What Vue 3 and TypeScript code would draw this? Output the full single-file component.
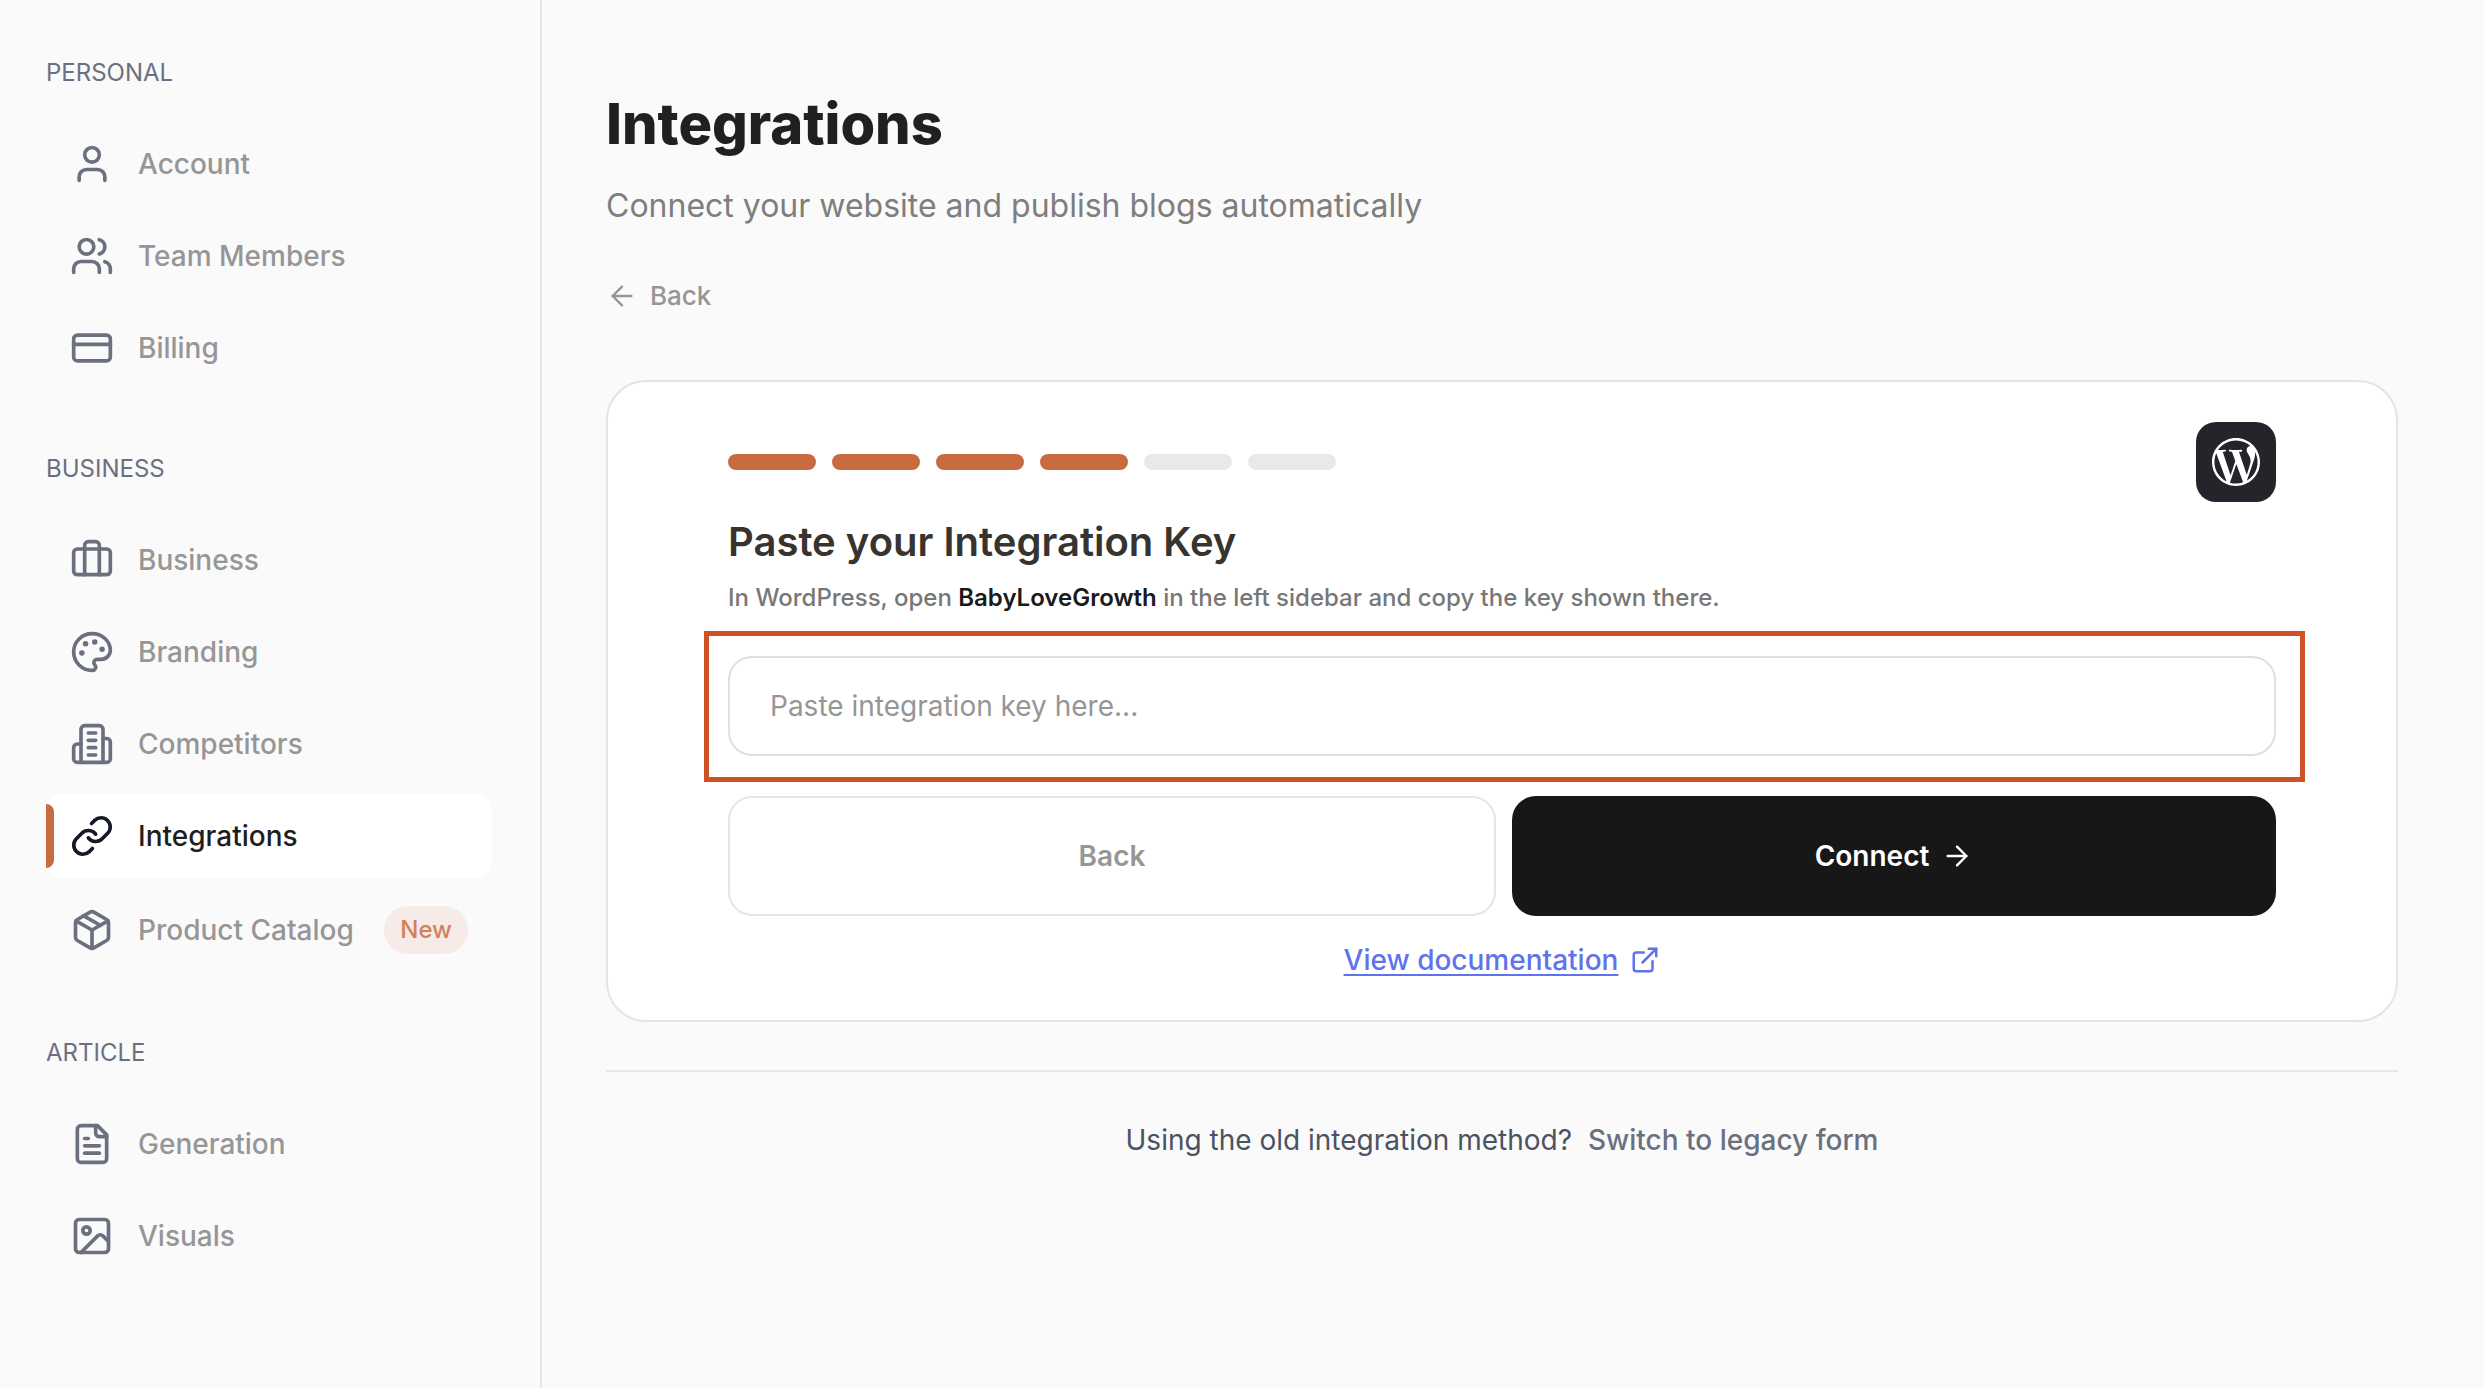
<script setup lang="ts">
import { ref } from 'vue'

interface NavItem {
  label: string
  icon: string[]
  active?: boolean
  badge?: string
}

interface NavSection {
  title: string
  items: NavItem[]
}

// Each icon is a list of stroked paths on a 24 × 24 grid.
const sections: NavSection[] = [
  {
    title: 'PERSONAL',
    items: [
      {
        label: 'Account',
        icon: ['M19 21v-2a4 4 0 0 0-4-4H9a4 4 0 0 0-4 4v2', 'M8 7a4 4 0 1 0 8 0a4 4 0 1 0-8 0'],
      },
      {
        label: 'Team Members',
        icon: [
          'M16 21v-2a4 4 0 0 0-4-4H6a4 4 0 0 0-4 4v2',
          'M5 7a4 4 0 1 0 8 0a4 4 0 1 0-8 0',
          'M22 21v-2a4 4 0 0 0-3-3.87',
          'M16 3.13a4 4 0 0 1 0 7.75',
        ],
      },
      {
        label: 'Billing',
        icon: ['M4 5h16a2 2 0 0 1 2 2v10a2 2 0 0 1-2 2H4a2 2 0 0 1-2-2V7a2 2 0 0 1 2-2z', 'M2 10h20'],
      },
    ],
  },
  {
    title: 'BUSINESS',
    items: [
      {
        label: 'Business',
        icon: [
          'M16 20V4a2 2 0 0 0-2-2h-4a2 2 0 0 0-2 2v16',
          'M4 6h16a2 2 0 0 1 2 2v10a2 2 0 0 1-2 2H4a2 2 0 0 1-2-2V8a2 2 0 0 1 2-2z',
        ],
      },
      {
        label: 'Branding',
        icon: [
          'M12 22a1 1 0 0 1 0-20 10 9 0 0 1 10 9 5 5 0 0 1-5 5h-2.25a1.75 1.75 0 0 0-1.4 2.8l.3.4a1.75 1.75 0 0 1-1.4 2.8z',
          'M13 6.5a.5.5 0 1 0 1 0a.5.5 0 1 0-1 0',
          'M17 10.5a.5.5 0 1 0 1 0a.5.5 0 1 0-1 0',
          'M6 12.5a.5.5 0 1 0 1 0a.5.5 0 1 0-1 0',
          'M8 7.5a.5.5 0 1 0 1 0a.5.5 0 1 0-1 0',
        ],
      },
      {
        label: 'Competitors',
        icon: [
          'M6 22V4a2 2 0 0 1 2-2h8a2 2 0 0 1 2 2v18Z',
          'M6 12H4a2 2 0 0 0-2 2v6a2 2 0 0 0 2 2h2',
          'M18 9h2a2 2 0 0 1 2 2v9a2 2 0 0 1-2 2h-2',
          'M10 6h4',
          'M10 10h4',
          'M10 14h4',
          'M10 18h4',
        ],
      },
      {
        label: 'Integrations',
        active: true,
        icon: [
          'M10 13a5 5 0 0 0 7.54.54l3-3a5 5 0 0 0-7.07-7.07l-1.72 1.71',
          'M14 11a5 5 0 0 0-7.54-.54l-3 3a5 5 0 0 0 7.07 7.07l1.71-1.71',
        ],
      },
      {
        label: 'Product Catalog',
        badge: 'New',
        icon: [
          'M11 21.73a2 2 0 0 0 2 0l7-4A2 2 0 0 0 21 16V8a2 2 0 0 0-1-1.73l-7-4a2 2 0 0 0-2 0l-7 4A2 2 0 0 0 3 8v8a2 2 0 0 0 1 1.73z',
          'M12 22V12',
          'm3.3 7 8.7 5 8.7-5',
          'm7.5 4.27 9 5.15',
        ],
      },
    ],
  },
  {
    title: 'ARTICLE',
    items: [
      {
        label: 'Generation',
        icon: [
          'M15 2H6a2 2 0 0 0-2 2v16a2 2 0 0 0 2 2h12a2 2 0 0 0 2-2V7Z',
          'M14 2v4a2 2 0 0 0 2 2h4',
          'M10 9H8',
          'M16 13H8',
          'M16 17H8',
        ],
      },
      {
        label: 'Visuals',
        icon: [
          'M5 3h14a2 2 0 0 1 2 2v14a2 2 0 0 1-2 2H5a2 2 0 0 1-2-2V5a2 2 0 0 1 2-2z',
          'M7 9a2 2 0 1 0 4 0a2 2 0 1 0-4 0',
          'm21 15-3.086-3.086a2 2 0 0 0-2.828 0L6 21',
        ],
      },
    ],
  },
]

const totalSteps = 6
const currentStep = 4
const integrationKey = ref('')
</script>

<template>
  <div class="page">
    <nav class="sidebar" aria-label="Settings">
      <section v-for="section in sections" :key="section.title" class="nav-section">
        <h2 class="nav-title">{{ section.title }}</h2>
        <div class="nav-list">
          <a
            v-for="item in section.items"
            :key="item.label"
            href="#"
            class="nav-item"
            :class="{ active: item.active }"
          >
            <svg class="nav-icon" viewBox="0 0 24 24" aria-hidden="true">
              <path v-for="d in item.icon" :key="d" :d="d" />
            </svg>
            <span>{{ item.label }}</span>
            <span v-if="item.badge" class="badge">{{ item.badge }}</span>
          </a>
        </div>
      </section>
    </nav>

    <main class="content">
      <h1 class="title">Integrations</h1>
      <p class="subtitle">Connect your website and publish blogs automatically</p>
      <a href="#" class="back-link">
        <svg class="arrow" viewBox="0 0 24 24" aria-hidden="true">
          <path d="m12 19-7-7 7-7" />
          <path d="M19 12H5" />
        </svg>
        <span>Back</span>
      </a>

      <form class="card" @submit.prevent>
        <div class="card-head">
          <div class="steps">
            <span v-for="n in totalSteps" :key="n" class="step" :class="{ done: n <= currentStep }"></span>
          </div>
          <div class="logo">
            <svg viewBox="0 0 24 24" aria-hidden="true">
              <path
                d="M21.469 6.825c.84 1.537 1.318 3.3 1.318 5.175 0 3.979-2.156 7.456-5.363 9.325l3.295-9.527c.615-1.54.82-2.771.82-3.864 0-.405-.026-.78-.07-1.11m-7.981.105c.647-.03 1.232-.105 1.232-.105.582-.075.514-.93-.067-.899 0 0-1.755.135-2.88.135-1.064 0-2.85-.15-2.85-.15-.585-.03-.661.855-.075.885 0 0 .54.061 1.125.09l1.68 4.605-2.37 7.08L5.354 6.9c.649-.03 1.234-.1 1.234-.1.585-.075.516-.93-.065-.896 0 0-1.746.138-2.874.138-.2 0-.438-.008-.69-.015C4.911 3.15 8.235 1.215 12 1.215c2.809 0 5.365 1.072 7.286 2.833-.046-.003-.091-.009-.141-.009-1.06 0-1.812.923-1.812 1.914 0 .89.513 1.643 1.06 2.531.411.72.89 1.643.89 2.977 0 .915-.354 1.994-.821 3.479l-1.075 3.585-3.9-11.61.001.014zM12 22.784c-1.059 0-2.081-.153-3.048-.437l3.237-9.406 3.315 9.087c.024.053.05.101.078.149-1.12.393-2.325.609-3.582.609M1.211 12c0-1.564.336-3.05.935-4.39L7.29 21.709C3.694 19.96 1.212 16.271 1.211 12M12 0C5.385 0 0 5.385 0 12s5.385 12 12 12 12-5.385 12-12S18.615 0 12 0"
              />
            </svg>
          </div>
        </div>

        <h2 class="card-title"><label for="integration-key">Paste your Integration Key</label></h2>
        <p class="card-text">
          In WordPress, open <strong>BabyLoveGrowth</strong> in the left sidebar and copy the key shown there.
        </p>

        <div class="field">
          <input
            id="integration-key"
            v-model="integrationKey"
            type="text"
            placeholder="Paste integration key here..."
          />
        </div>

        <div class="actions">
          <button type="button" class="btn btn-back">Back</button>
          <button type="submit" class="btn btn-connect">
            <span>Connect</span>
            <svg class="arrow" viewBox="0 0 24 24" aria-hidden="true">
              <path d="M5 12h14" />
              <path d="m12 5 7 7-7 7" />
            </svg>
          </button>
        </div>

        <div class="docs">
          <a href="#" class="docs-link">View documentation</a>
          <svg viewBox="0 0 24 24" aria-hidden="true">
            <path d="M15 3h6v6" />
            <path d="M10 14 21 3" />
            <path d="M18 13v6a2 2 0 0 1-2 2H5a2 2 0 0 1-2-2V8a2 2 0 0 1 2-2h6" />
          </svg>
        </div>
      </form>

      <footer class="legacy">
        <span>Using the old integration method?</span>
        <a href="#">Switch to legacy form</a>
      </footer>
    </main>
  </div>
</template>

<style>
body {
  background: #fafafa;
}
</style>

<style scoped>
.page {
  display: flex;
  min-height: 100vh;
  font-family: Inter, "Liberation Sans", sans-serif;
  font-size: 28px;
  line-height: 40px;
}

a {
  color: inherit;
  text-decoration: none;
}

svg {
  flex: none;
  fill: none;
  stroke: currentColor;
  stroke-width: 2;
  stroke-linecap: round;
  stroke-linejoin: round;
}

.sidebar {
  display: flex;
  flex: none;
  flex-direction: column;
  gap: 63px;
  box-sizing: border-box;
  width: 542px;
  padding: 57px 48px 56px 46px;
  border-right: 2px solid #e5e7eb;
}

.nav-title {
  margin: 0 0 33px;
  color: #6b7080;
  font-size: 24px;
  font-weight: 400;
  line-height: 32px;
}

.nav-list {
  display: flex;
  flex-direction: column;
  gap: 8px;
}

.nav-item {
  position: relative;
  display: flex;
  align-items: center;
  gap: 24px;
  padding: 20px 24px;
  border-radius: 16px;
  color: #969696;
  font-weight: 500;
  white-space: nowrap;
}

.nav-icon {
  width: 44px;
  height: 44px;
  color: #6b7080;
}

.nav-item.active {
  background: #fff;
  color: #1e1e1e;
}

.nav-item.active .nav-icon {
  color: #141828;
}

.nav-item.active::before {
  content: "";
  position: absolute;
  top: 10px;
  bottom: 10px;
  left: 0;
  width: 8px;
  border-radius: 0 8px 8px 0;
  background: #c96b40;
}

.badge {
  margin-left: auto;
  padding: 4px 16px;
  border-radius: 24px;
  background: #f6ebe7;
  color: #d4805c;
  font-size: 24px;
}

.content {
  flex: 1;
  min-width: 0;
  padding: 88px 86px 64px 64px;
}

.title {
  margin: 0 0 22px;
  color: #211f20;
  font-size: 56px;
  font-weight: 800;
  line-height: 72px;
}

.subtitle {
  margin: 0 0 46px;
  color: #7e7e7e;
  font-size: 32px;
  line-height: 48px;
}

.back-link {
  display: flex;
  align-items: center;
  gap: 12px;
  width: fit-content;
  margin-bottom: 64px;
  color: #969696;
  font-size: 26px;
  font-weight: 500;
}

.arrow {
  width: 32px;
  height: 32px;
  stroke-width: 1.8;
}

.card {
  padding: 40px 120px;
  border: 2px solid #e2e4ec;
  border-radius: 40px;
  background: #fff;
}

.card-head {
  display: flex;
  align-items: center;
  justify-content: space-between;
}

.steps {
  display: flex;
  gap: 16px;
}

.step {
  width: 88px;
  height: 16px;
  border-radius: 8px;
  background: #e9e9e9;
}

.step.done {
  background: #c96b40;
}

.logo {
  display: flex;
  align-items: center;
  justify-content: center;
  width: 80px;
  height: 80px;
  border-radius: 20px;
  background: #24252a;
}

.logo svg {
  width: 48px;
  height: 48px;
  fill: #fff;
  stroke: none;
}

.card-title {
  margin: 16px 0;
  color: #37332f;
  font-size: 40px;
  font-weight: 600;
  line-height: 48px;
}

.card-text {
  margin: 0 0 42px;
  color: #777;
  font-size: 24px;
  font-weight: 500;
  line-height: 32px;
}

.card-text strong {
  color: #1a1a1a;
  font-weight: 600;
}

.field {
  position: relative;
}

.field::after {
  content: "";
  position: absolute;
  inset: -25px -29px -26px -24px;
  border: 5px solid #cf5226;
  pointer-events: none;
}

.field input {
  display: block;
  box-sizing: border-box;
  width: 100%;
  height: 100px;
  padding: 0 40px;
  border: 2px solid #dfdfdf;
  border-radius: 24px;
  outline: none;
  background: #fff;
  color: #1e1e1e;
  font: inherit;
}

.field input::placeholder {
  color: #969696;
  opacity: 1;
}

.actions {
  display: flex;
  gap: 16px;
  margin: 40px 0 24px;
}

.btn {
  display: flex;
  flex: 1;
  align-items: center;
  justify-content: center;
  gap: 12px;
  box-sizing: content-box;
  padding: 0;
  border: 0;
  border-radius: 24px;
  font: inherit;
  font-weight: 600;
}

.btn-back {
  height: 116px;
  border: 2px solid #e5e5e5;
  background: #fff;
  color: #969696;
}

.btn-connect {
  height: 120px;
  background: #171717;
  color: #fff;
}

.docs {
  display: flex;
  align-items: center;
  justify-content: center;
  gap: 12px;
  color: #5f73ec;
  font-weight: 500;
}

.docs-link {
  text-decoration: underline;
  text-decoration-thickness: 2px;
  text-underline-offset: 4px;
}

.docs svg {
  width: 30px;
  height: 30px;
}

.legacy {
  display: flex;
  justify-content: center;
  gap: 16px;
  margin-top: 48px;
  padding-top: 48px;
  border-top: 2px solid #e5e7eb;
  color: #4b5262;
}

.legacy a {
  color: #6b7080;
  font-weight: 500;
}
</style>
